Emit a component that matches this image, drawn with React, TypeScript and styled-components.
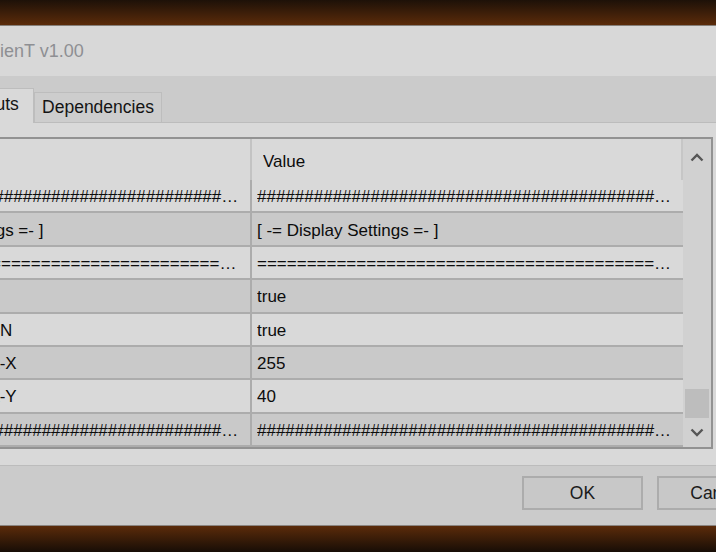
import React from "react";
import styled, { createGlobalStyle } from "styled-components";

const GlobalStyle = createGlobalStyle`
  html, body { margin: 0; padding: 0; background: #1a0f07; overflow: hidden; }
  #root { width: 716px; height: 552px; }
  * { box-sizing: border-box; }
`;

const Screen = styled.div`
  width: 716px;
  height: 552px;
  overflow: hidden;
  display: flex;
  flex-direction: column;
  font-family: "Liberation Sans", Arial, sans-serif;
`;

const TopBand = styled.div`
  flex: none;
  height: 26px;
  background: linear-gradient(#1d1108, #5b2b0a);
  border-bottom: 1px solid #857e78;
`;

const BottomBand = styled.div`
  flex: 1;
  background: linear-gradient(#5b2b0a, #170d06);
`;

const Dialog = styled.div`
  flex: none;
  width: 1000px;
  margin-left: -200px;
  display: flex;
  flex-direction: column;
  background: #cbcbcb;
  border-bottom: 1px solid #8a8480;
`;

const TitleBar = styled.div`
  height: 50px;
  display: flex;
  align-items: center;
  padding-left: 183px;
  background: #d8d8d8;
  color: #8e8f93;
  font-size: 18px;
  white-space: nowrap;
`;

const TabStrip = styled.div`
  height: 46px;
  display: flex;
  align-items: flex-end;
  padding-left: 8px;
  background: #cbcbcb;
  position: relative;
  z-index: 1;
`;

const Tab = styled.div<{ $w: number; $active?: boolean }>`
  flex: none;
  width: ${(p) => p.$w}px;
  height: ${(p) => (p.$active ? 35 : 30)}px;
  margin-bottom: ${(p) => (p.$active ? -1 : 0)}px;
  padding-bottom: ${(p) => (p.$active ? 4 : 0)}px;
  display: flex;
  align-items: center;
  justify-content: center;
  background: ${(p) => (p.$active ? "#d9d9d9" : "#cdcdcd")};
  border: 1px solid #bdbdbd;
  border-bottom: none;
  font-size: 17.5px;
  color: #141414;
  white-space: nowrap;
`;

const Panel = styled.div`
  height: 344px;
  margin: 0 8px;
  display: flex;
  gap: 14px;
  padding: 14px 8px 16px 47px;
  background: #d9d9d9;
  border: 1px solid #bcbcbc;
`;

const Grid = styled.div`
  flex: 1;
  min-width: 0;
  display: flex;
  border: 2px solid #929292;
  background: #d9d9d9;
`;

const GridBody = styled.div`
  flex: 1;
  min-width: 0;
  display: flex;
  flex-direction: column;
`;

const HeaderRow = styled.div`
  flex: none;
  height: 41px;
  display: flex;
  background: #d9d9d9;
  border-right: 2px solid #c6c6c6;
`;

const Row = styled.div<{ $alt: boolean }>`
  flex: 1;
  display: flex;
  background: ${(p) => (p.$alt ? "#c9c9c9" : "#d9d9d9")};
  border-bottom: 2px solid #acacac;
`;

const Cell = styled.div<{ $first?: boolean; $head?: boolean }>`
  ${(p) => (p.$first ? "flex: none; width: 394px;" : "flex: 1; min-width: 0;")}
  display: flex;
  align-items: center;
  overflow: hidden;
  padding-top: ${(p) => (p.$head ? 4 : 3)}px;
  padding-left: ${(p) => (p.$first ? 4 : p.$head ? 11 : 5)}px;
  padding-right: 4px;
  border-right: ${(p) =>
    p.$first ? `2px solid ${p.$head ? "#c3c3c3" : "#acacac"}` : "none"};
  font-size: 17px;
  color: #0c0c0c;
`;

const CellText = styled.span`
  min-width: 0;
  overflow: hidden;
  text-overflow: ellipsis;
  white-space: nowrap;
`;

const ScrollBar = styled.div`
  flex: none;
  width: 28px;
  display: flex;
  flex-direction: column;
  background: #d1d1d1;
`;

const ScrollButton = styled.div<{ $h: number }>`
  flex: none;
  height: ${(p) => p.$h}px;
  display: flex;
  align-items: center;
  justify-content: center;
`;

const Track = styled.div`
  flex: 1;
  display: flex;
  flex-direction: column;
  justify-content: flex-end;
  padding: 0 2px;
`;

const Thumb = styled.div`
  height: 29px;
  background: #bdbdbd;
`;

const SideColumn = styled.div`
  flex: none;
  width: 56px;
  display: flex;
  flex-direction: column;
  gap: 10px;
`;

const ButtonBar = styled.div`
  height: 59px;
  display: flex;
  justify-content: flex-end;
  align-items: flex-start;
  gap: 14px;
  padding: 10px 22px 0 0;
  background: #cbcbcb;
`;

const Button = styled.div<{ $w: number }>`
  flex: none;
  width: ${(p) => p.$w}px;
  height: 34px;
  display: flex;
  align-items: center;
  justify-content: center;
  background: #c8c8c8;
  border: 2px solid #acacac;
  font-size: 17.5px;
  color: #1b1b1b;
  white-space: nowrap;
`;

const Chevron = ({ up }: { up: boolean }) => (
  <svg width="14" height="9" viewBox="0 0 14 9">
    <path
      d={up ? "M1.5 7.5 L7 2 L12.5 7.5" : "M1.5 1.5 L7 7 L12.5 1.5"}
      fill="none"
      stroke="#565656"
      strokeWidth="2.4"
    />
  </svg>
);

const hashes = "#".repeat(60);
const equals = "=".repeat(60);

const rows: [string, string][] = [
  [hashes, hashes],
  ["[ -= Display Settings =- ]", "[ -= Display Settings =- ]"],
  [equals, equals],
  ["Show_Info", "true"],
  ["Display_Labels_ON", "true"],
  ["Dashboard_Offset-X", "255"],
  ["Dashboard_Offset-Y", "40"],
  [hashes, hashes],
];

export default function App() {
  return (
    <Screen>
      <GlobalStyle />
      <TopBand />
      <Dialog>
        <TitleBar>ClienT v1.00</TitleBar>
        <TabStrip>
          <Tab $w={64}>About</Tab>
          <Tab $w={84}>Common</Tab>
          <Tab $w={78} $active>
            Inputs
          </Tab>
          <Tab $w={128}>Dependencies</Tab>
        </TabStrip>
        <Panel>
          <Grid>
            <GridBody>
              <HeaderRow>
                <Cell $first $head>
                  <CellText>Variable</CellText>
                </Cell>
                <Cell $head>
                  <CellText>Value</CellText>
                </Cell>
              </HeaderRow>
              {rows.map(([name, value], i) => (
                <Row key={i} $alt={i % 2 === 1}>
                  <Cell $first>
                    <CellText>{name}</CellText>
                  </Cell>
                  <Cell>
                    <CellText>{value}</CellText>
                  </Cell>
                </Row>
              ))}
            </GridBody>
            <ScrollBar>
              <ScrollButton $h={36}>
                <Chevron up />
              </ScrollButton>
              <Track>
                <Thumb />
              </Track>
              <ScrollButton $h={29}>
                <Chevron up={false} />
              </ScrollButton>
            </ScrollBar>
          </Grid>
          <SideColumn>
            <Button $w={56}>Load</Button>
            <Button $w={56}>Save</Button>
          </SideColumn>
        </Panel>
        <ButtonBar>
          <Button $w={121}>OK</Button>
          <Button $w={121}>Cancel</Button>
        </ButtonBar>
      </Dialog>
      <BottomBand />
    </Screen>
  );
}
